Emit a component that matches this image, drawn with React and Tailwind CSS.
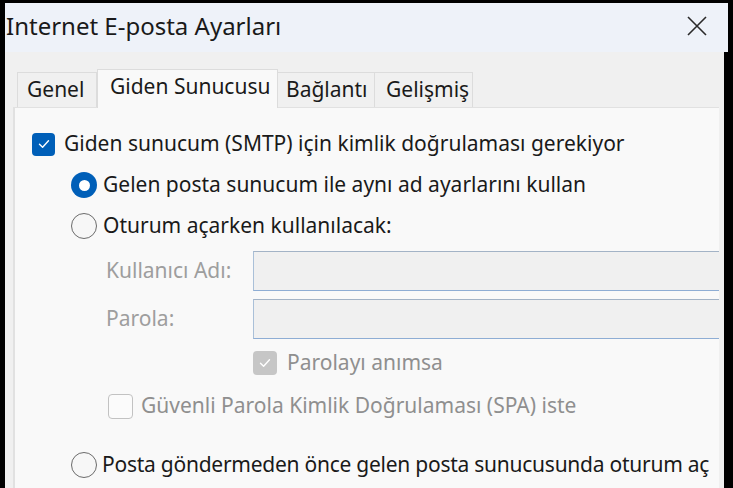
import React from "react";

const F = { fontFamily: '"Noto Sans", "Open Sans", sans-serif' };

function Check({ color = "#ffffff" }) {
  return (
    <svg width="14" height="14" viewBox="0 0 14 14" fill="none">
      <path d="M2.5 7.2 L5.6 10.2 L11.5 3.8" stroke={color} strokeWidth="1.4" strokeLinecap="round" strokeLinejoin="round" />
    </svg>
  );
}

function Radio({ on }) {
  if (on)
    return (
      <div className="w-[26px] h-[26px] rounded-full bg-[#005fb8] flex items-center justify-center shrink-0">
        <div className="w-[11px] h-[11px] rounded-full bg-white" />
      </div>
    );
  return <div className="w-[26px] h-[26px] rounded-full border-[1.5px] border-[#6b6b6b] bg-[#f7f7f7] shrink-0" />;
}

export default function App() {
  return (
    <div className="w-[733px] h-[488px] bg-black overflow-hidden pt-[3px] pl-[5px] pr-[5px]" style={F}>
      <div className="h-[49px] bg-[#eef2f9] flex items-center justify-between">
        <span className="text-[24px] text-[#1a1a1a] pl-[1px] leading-none -mt-[4px]">Internet E-posta Ayarları</span>
        <svg width="20" height="20" viewBox="0 0 20 20" className="mr-[21px] -mt-[4px]">
          <path d="M1 1 L19 19 M19 1 L1 19" stroke="#2a2a2a" strokeWidth="1.6" />
        </svg>
      </div>
      <div className="mr-[4px] h-[436px] bg-[#f0f0f0] flex flex-col">
        <div className="flex items-end pl-[12px] pt-[17px] h-[55px]">
          <div className="h-[35px] w-[80px] border border-b-0 border-[#dcdcdc] bg-[#f0f0f0] flex items-center pl-[9px] text-[21px] text-[#1a1a1a]">Genel</div>
          <div className="h-[39px] w-[181px] border border-b-0 border-[#dcdcdc] bg-[#f9f9f9] flex items-center pl-[12px] pb-[4px] text-[21px] text-[#1a1a1a] -mb-[1px] relative z-10">Giden Sunucusu</div>
          <div className="h-[35px] w-[97px] border border-b-0 border-l-0 border-[#dcdcdc] bg-[#f0f0f0] flex items-center pl-[8px] text-[21px] text-[#1a1a1a]">Bağlantı</div>
          <div className="h-[35px] w-[98px] border border-b-0 border-l-0 border-[#dcdcdc] bg-[#f0f0f0] flex items-center pl-[11px] text-[21px] text-[#1a1a1a]">Gelişmiş</div>
        </div>
        <div className="ml-[8px] mr-[5px] flex-1 bg-[#f9f9f9] border-l-2 border-t border-[#e1e1e1] overflow-hidden flex flex-col text-[21px] text-[#1a1a1a] pt-[21px]">
          <div className="h-[30px] flex items-center pl-[17px] whitespace-nowrap">
            <div className="w-[23px] h-[23px] rounded-[4px] bg-[#005fb8] flex items-center justify-center shrink-0">
              <Check />
            </div>
            <span className="ml-[9px]">Giden sunucum (SMTP) için kimlik doğrulaması gerekiyor</span>
          </div>
          <div className="mt-[11px] h-[30px] flex items-center pl-[56px] whitespace-nowrap">
            <Radio on />
            <span className="ml-[6px]">Gelen posta sunucum ile aynı ad ayarlarını kullan</span>
          </div>
          <div className="mt-[11px] h-[30px] flex items-center pl-[56px] whitespace-nowrap">
            <Radio />
            <span className="ml-[6px]">Oturum açarken kullanılacak:</span>
          </div>
          <div className="mt-[10px] h-[40px] flex items-center whitespace-nowrap">
            <span className="w-[238px] pl-[91px] shrink-0 text-[#9e9e9e]">Kullanıcı Adı:</span>
            <div className="h-[40px] flex-1 bg-[#f0f0f0] border border-r-0 border-[#aac0d8] border-t-[#a3b3c6] border-b-[#8eadd4]" />
          </div>
          <div className="mt-[8px] h-[40px] flex items-center whitespace-nowrap">
            <span className="w-[238px] pl-[91px] shrink-0 text-[#9e9e9e]">Parola:</span>
            <div className="h-[40px] flex-1 bg-[#f0f0f0] border border-r-0 border-[#aac0d8] border-t-[#a3b3c6] border-b-[#8eadd4]" />
          </div>
          <div className="mt-[10px] h-[28px] flex items-center pl-[238px] whitespace-nowrap">
            <div className="w-[24px] h-[24px] rounded-[4px] bg-[#c6c6c6] flex items-center justify-center shrink-0">
              <Check />
            </div>
            <span className="ml-[10px] text-[#8f8f8f]">Parolayı anımsa</span>
          </div>
          <div className="mt-[15px] h-[28px] flex items-center pl-[93px] whitespace-nowrap">
            <div className="w-[25px] h-[25px] rounded-[4px] border border-[#c2c2c2] bg-[#fbfbfb] shrink-0" />
            <span className="ml-[8px] text-[#8f8f8f]">Güvenli Parola Kimlik Doğrulaması (SPA) iste</span>
          </div>
          <div className="mt-[30px] h-[30px] flex items-center pl-[56px] whitespace-nowrap">
            <Radio />
            <span className="ml-[5px] tracking-[-0.25px]">Posta göndermeden önce gelen posta sunucusunda oturum aç</span>
          </div>
        </div>
      </div>
    </div>
  );
}
